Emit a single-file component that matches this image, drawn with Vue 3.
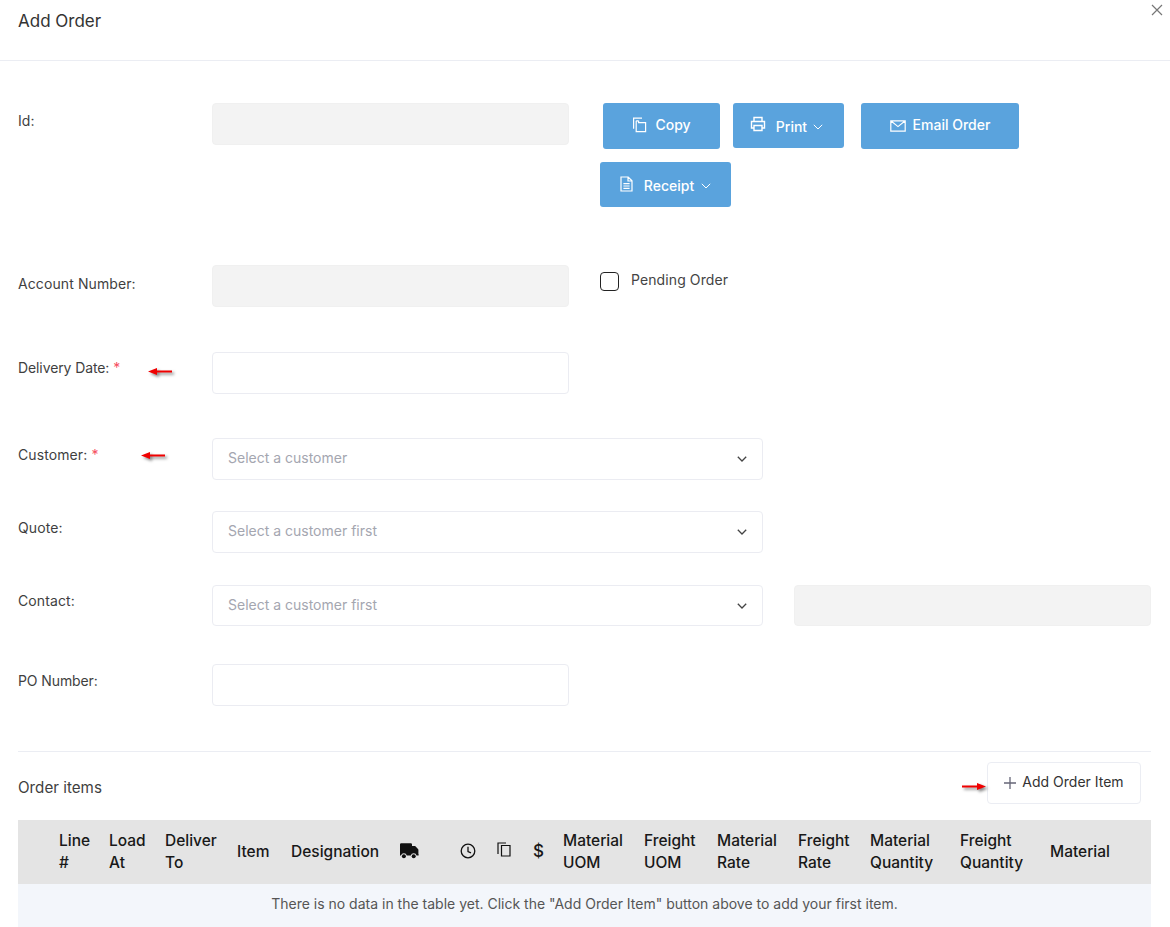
<script setup>
const columns = [
  { id: "line", lines: ["Line", "#"] },
  { id: "load", lines: ["Load", "At"] },
  { id: "deliver", lines: ["Deliver", "To"] },
  { id: "item", lines: ["Item"] },
  { id: "designation", lines: ["Designation"] },
  { id: "truck", icon: "truck" },
  { id: "clock", icon: "clock" },
  { id: "copy", icon: "copy" },
  { id: "dollar", icon: "dollar" },
  { id: "muom", lines: ["Material", "UOM"] },
  { id: "fuom", lines: ["Freight", "UOM"] },
  { id: "mrate", lines: ["Material", "Rate"] },
  { id: "frate", lines: ["Freight", "Rate"] },
  { id: "mqty", lines: ["Material", "Quantity"] },
  { id: "fqty", lines: ["Freight", "Quantity"] },
  { id: "material", lines: ["Material"] },
];
</script>

<template>
  <div class="modal">
    <header class="modal-header">
      <h1>Add Order</h1>
      <svg class="close" viewBox="0 0 12 12" width="12" height="12">
        <path d="M1 1l10 10M11 1L1 11" stroke="#777" stroke-width="1.2" fill="none" />
      </svg>
    </header>

    <form class="form" @submit.prevent>
      <div class="row id-row">
        <label>Id:</label>
        <div class="input disabled"></div>
        <div class="actions">
          <div class="btn-line">
            <button type="button" class="btn btn-copy">
              <svg viewBox="0 0 16 16" width="16" height="16" fill="none" stroke="#fff" stroke-width="1.2">
                <path d="M10 1.2H1.6v10.6" />
                <path d="M4.2 3.8h2.4M4.2 3.8v10.8h9.4V5.6H6.6V3.8" />
              </svg>
              Copy
            </button>
            <button type="button" class="btn btn-print">
              <svg viewBox="0 0 16 16" width="16" height="16" fill="none" stroke="#fff" stroke-width="1.4">
                <path d="M4 5V1.500h8V5M4 12H1.500V5.500h13V12H12" />
                <path d="M4 9.500h8v5H4z" />
              </svg>
              <span class="with-caret">Print</span>
              <svg class="caret" viewBox="0 0 10 6" width="10" height="6"><path d="M.8.8L5 5l4.2-4.2" fill="none" stroke="#fff" stroke-width="1" /></svg>
            </button>
            <button type="button" class="btn btn-email">
              <svg viewBox="0 0 16 12" width="16" height="12" fill="none" stroke="#fff" stroke-width="1.2">
                <path d="M.8.8h14.400v10.400H.8zM.8.8L8 6.600 15.200.8" />
              </svg>
              Email Order
            </button>
          </div>
          <button type="button" class="btn btn-receipt">
            <svg viewBox="0 0 13 16" width="13" height="16" fill="none" stroke="#fff" stroke-width="1.2">
              <path d="M1 1h7.200L12 4.800V15H1zM8 1v4h4M3.400 7.600h6.200M3.400 10h6.200M3.400 12.400h6.200" />
            </svg>
            <span class="with-caret">Receipt</span>
            <svg class="caret" viewBox="0 0 10 6" width="10" height="6"><path d="M.8.8L5 5l4.200-4.200" fill="none" stroke="#fff" stroke-width="1" /></svg>
          </button>
        </div>
      </div>

      <div class="row account-row">
        <label>Account Number:</label>
        <div class="input disabled"></div>
        <div class="pending">
          <span class="checkbox"></span>
          <span class="pending-text">Pending Order</span>
        </div>
      </div>

      <div class="row delivery-row">
        <label>Delivery Date: <em>*</em>
          <svg class="arrow arrow-delivery" viewBox="0 0 30 14" width="30" height="14">
            <path class="arrow-shape" d="M0 4.500L9 1v2.400h15v2.200H9V8z" />
          </svg>
        </label>
        <div class="input"></div>
      </div>

      <div class="row customer-row">
        <label>Customer: <em>*</em>
          <svg class="arrow arrow-customer" viewBox="0 0 30 14" width="30" height="14">
            <path class="arrow-shape" d="M0 4.500L9 1v2.400h15v2.200H9V8z" />
          </svg>
        </label>
        <div class="select">
          <span>Select a customer</span>
          <svg viewBox="0 0 10 6" width="10" height="6"><path d="M.8.8L5 5l4.200-4.200" fill="none" stroke="#444" stroke-width="1.3" /></svg>
        </div>
      </div>

      <div class="row quote-row">
        <label>Quote:</label>
        <div class="select">
          <span>Select a customer first</span>
          <svg viewBox="0 0 10 6" width="10" height="6"><path d="M.8.8L5 5l4.200-4.200" fill="none" stroke="#444" stroke-width="1.3" /></svg>
        </div>
      </div>

      <div class="row contact-row">
        <label>Contact:</label>
        <div class="select contact-select">
          <span>Select a customer first</span>
          <svg viewBox="0 0 10 6" width="10" height="6"><path d="M.8.8L5 5l4.200-4.200" fill="none" stroke="#444" stroke-width="1.3" /></svg>
        </div>
        <div class="input disabled contact-extra"></div>
      </div>

      <div class="row po-row">
        <label>PO Number:</label>
        <div class="input"></div>
      </div>
    </form>

    <section class="items">
      <div class="items-head">
        <h2>Order items</h2>
        <div class="add-wrap">
          <svg class="arrow arrow-add" viewBox="0 0 30 14" width="30" height="14">
            <path class="arrow-shape" d="M25 4.500L16 1v2.400H1v2.200h15V8z" />
          </svg>
          <button type="button" class="btn-add">
            <svg viewBox="0 0 12 12" width="12" height="12"><path d="M6 0v12M0 6h12" stroke="#667" stroke-width="1.3" /></svg>
            <span>Add Order Item</span>
          </button>
        </div>
      </div>

      <div class="table-head">
        <div v-for="col in columns" :key="col.id" class="th">
          <template v-if="col.lines">
            <span v-for="line in col.lines" :key="line">{{ line }}</span>
          </template>
          <svg v-else-if="col.icon === 'truck'" class="th-icon" viewBox="0 0 20 16" width="20" height="16">
            <path d="M1 1.500A1.200 1.200 0 012.200.3h9.600A1.200 1.200 0 0113 1.500V3h2.600c.4 0 .7.2 1 .4l2.400 2.600c.3.3.4.6.4 1v4h.2v1.600h-2a3 3 0 00-5.800 0H7.800a3 3 0 00-5.800 0h-.8A.9.9 0 011 11.700z" fill="#111" />
            <circle cx="4.900" cy="13.300" r="2" fill="#111" />
            <circle cx="14.700" cy="13.300" r="2" fill="#111" />
          </svg>
          <svg v-else-if="col.icon === 'clock'" class="th-icon" viewBox="0 0 16 16" width="16" height="16" fill="none" stroke="#111" stroke-width="1.3">
            <circle cx="8" cy="8" r="6.800" />
            <path d="M8 3.800V8.500l3 1.300" />
          </svg>
          <svg v-else-if="col.icon === 'copy'" class="th-icon copy-icon" viewBox="0 0 14 15" width="14" height="15" fill="none" stroke="#111" stroke-width="1.200">
            <path d="M9 1H1v11" />
            <path d="M4.500 3.500H13v10.500H4.500z" />
          </svg>
          <span v-else class="dollar">$</span>
        </div>
      </div>
      <div class="table-empty">
        There is no data in the table yet. Click the "Add Order Item" button above to add your first item.
      </div>
    </section>
  </div>
</template>

<style scoped>
.modal {
  position: relative;
  width: 1170px;
  height: 927px;
  overflow: hidden;
  background: #fff;
  color: #3f4254;
  font-family: Inter, "Liberation Sans", sans-serif;
  font-size: 14px;
}

.modal-header {
  height: 61px;
  box-sizing: border-box;
  border-bottom: 1px solid #ebedf3;
  padding: 12px 18px 0;
}
.modal-header h1 {
  margin: 0;
  font-size: 17px;
  line-height: 18px;
  font-weight: 400;
  color: #333;
}
.close {
  position: absolute;
  top: 4px;
  right: 7px;
}

.form {
  padding: 42px 19px 0 18px;
}
.row {
  display: flex;
  align-items: flex-start;
}
.row label {
  position: relative;
  width: 194px;
  flex: none;
  padding-top: 8px;
  line-height: 18px;
  color: #3f3f3f;
  letter-spacing: 0.1px;
}
.row label em {
  font-style: normal;
  color: #f64e60;
}

.input {
  width: 357px;
  height: 42px;
  box-sizing: border-box;
  flex: none;
  border: 1px solid #ebecf2;
  border-radius: 4px;
}
.input.disabled {
  background: #f3f3f3;
  border-color: #f0f0f0;
}

.select {
  width: 551px;
  height: 42px;
  box-sizing: border-box;
  flex: none;
  display: flex;
  align-items: center;
  justify-content: space-between;
  padding: 0 15px;
  border: 1px solid #ebecf2;
  border-radius: 4px;
  color: #a4a6b0;
}
.select span {
  padding-bottom: 3px;
}
.contact-select {
  height: 41px;
}

.actions {
  margin-left: 31px;
}
.btn-line {
  display: flex;
  align-items: flex-start;
  margin-left: 3px;
}
.btn {
  display: flex;
  align-items: center;
  justify-content: center;
  gap: 7px;
  box-sizing: border-box;
  border: none;
  border-radius: 3px;
  background: #5aa3dd;
  color: #fff;
  font: inherit;
  font-weight: 500;
  font-size: 14px;
}
.btn-copy {
  width: 117px;
  height: 46px;
  padding: 0 0 4px;
}
.btn-copy svg {
  margin-top: 2px;
}
.btn-print {
  width: 111px;
  height: 45px;
  margin-left: 13px;
  padding: 0 4px 0 0;
}
.btn-print > svg:first-child {
  margin-bottom: 3px;
}
.btn-print .with-caret {
  margin: 0 -1px 0 3px;
}
.btn-email {
  width: 158px;
  height: 46px;
  margin-left: 17px;
  padding: 0 0 4px;
}
.btn-email svg {
  margin-top: 4px;
}
.btn-receipt {
  width: 131px;
  height: 45px;
  margin-top: 13px;
}
.btn-receipt > svg:first-child {
  margin: 0 2px 2px 0;
}
.with-caret {
  margin-left: 2px;
  padding-top: 1px;
}
.caret {
  margin-top: 3px;
}

.id-row label {
  padding-top: 9px;
}
.account-row {
  margin-top: 58px;
}
.account-row label {
  padding-top: 10px;
}
.pending {
  display: flex;
  align-items: center;
  margin: 6px 0 0 31px;
  gap: 12px;
}
.pending-text {
  color: #444;
  padding-bottom: 3px;
  letter-spacing: 0.1px;
}
.checkbox {
  width: 19px;
  height: 19px;
  box-sizing: border-box;
  border: 1px solid #222;
  border-radius: 4px;
}

.delivery-row {
  margin-top: 45px;
}
.delivery-row label {
  padding-top: 7px;
  letter-spacing: -0.1px;
}
.customer-row {
  margin-top: 44px;
}
.quote-row {
  margin-top: 31px;
}
.contact-row {
  margin-top: 32px;
}
.contact-row label {
  padding-top: 7px;
}
.contact-extra {
  margin-left: 31px;
  height: 41px;
}
.po-row {
  margin-top: 38px;
}
.po-row label {
  letter-spacing: -0.1px;
}

.arrow {
  position: absolute;
  overflow: visible;
}
.arrow-shape {
  fill: #f00000;
  filter: drop-shadow(2px 2px 1.5px rgba(0, 0, 0, 0.5));
}
.arrow-delivery {
  left: 130px;
  top: 15px;
}
.arrow-customer {
  left: 123px;
  top: 13px;
}
.arrow-add {
  position: absolute;
  left: -26px;
  top: 20px;
}

.items {
  margin: 45px 19px 0 18px;
  border-top: 1px solid #ebedf3;
}
.items-head {
  display: flex;
  align-items: flex-start;
  justify-content: space-between;
  padding: 10px 10px 0 0;
  height: 58px;
  box-sizing: border-box;
  margin-bottom: 10px;
}
.items-head h2 {
  margin: 16px 0 0;
  font-size: 15.2px;
  line-height: 20px;
  font-weight: 400;
  color: #3f3f3f;
}
.add-wrap {
  position: relative;
}
.btn-add {
  display: flex;
  align-items: center;
  justify-content: center;
  gap: 6px;
  width: 154px;
  height: 42px;
  background: #fff;
  border: 1px solid #ebedf3;
  border-radius: 4px;
  font: inherit;
  color: #333;
}
.btn-add span {
  padding-bottom: 3px;
}

.table-head {
  display: grid;
  grid-template-columns: 50px 56px 72px 54px 108px 61px 37px 36px 30px 81px 73px 81px 72px 90px 90px 1fr;
  height: 64px;
  padding-left: 41px;
  align-items: center;
  background: #e4e4e4;
  color: #181818;
  font-size: 15.5px;
  font-weight: 500;
  line-height: 22px;
}
.th {
  display: flex;
  flex-direction: column;
}
.th-icon {
  margin-bottom: 2px;
}
.copy-icon {
  margin-bottom: 5px;
}
.dollar {
  font-size: 17px;
  font-weight: 500;
  margin-bottom: 2px;
}
.table-empty {
  height: 43px;
  line-height: 40px;
  background: #f3f6fb;
  text-align: center;
  color: #555;
}
</style>
